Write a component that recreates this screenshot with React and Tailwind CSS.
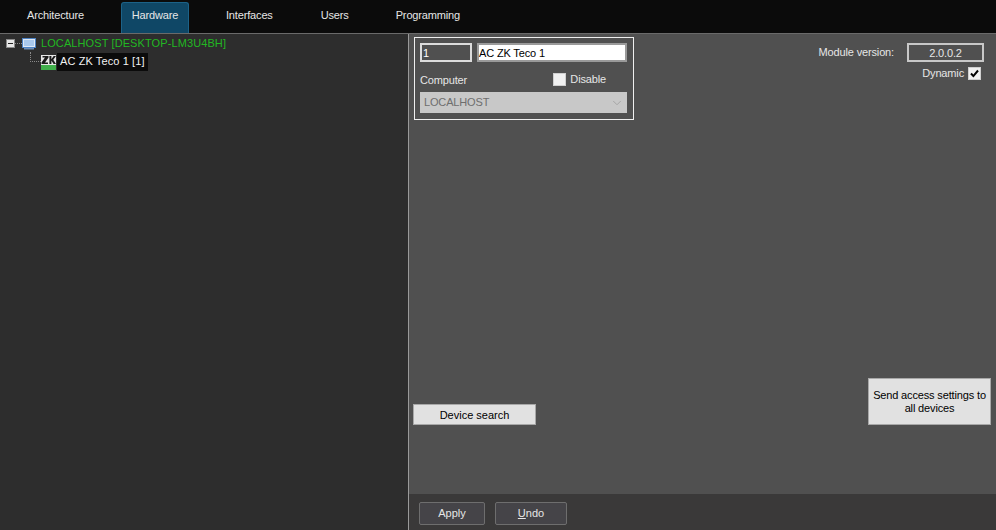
import React from 'react';
import { ChevronDown } from 'lucide-react';

const tabs = [
  { label: 'Architecture', className: 'ml-[27px] mr-[37px]' },
  { label: 'Hardware', active: true },
  { label: 'Interfaces', className: 'ml-[37px] mr-[48px]' },
  { label: 'Users', className: 'mr-[47px]' },
  { label: 'Programming' },
];

const TopTabs = () => (
  <div className="flex h-[33px] items-end bg-[#0b0b0b] tracking-[-0.15px] text-[#e6e6e6]">
    {tabs.map((tab) =>
      tab.active ? (
        <div
          key={tab.label}
          className="flex h-[31px] w-[68px] items-start justify-center rounded-t-[3px] border border-b-0 border-[#1c6288] bg-[#0f4766] pt-[4px]"
        >
          {tab.label}
        </div>
      ) : (
        <div key={tab.label} className={`flex h-[31px] items-start pt-[5px] ${tab.className}`}>
          {tab.label}
        </div>
      )
    )}
  </div>
);

const HostIcon = () => (
  <svg width="14" height="12" viewBox="0 0 14 12">
    <rect x="0.5" y="0.5" width="13" height="9" fill="#dfe9f5" stroke="#4d82c4" />
    <rect x="2" y="2" width="10" height="6" fill="#a9c8ec" />
    <rect x="2" y="10" width="10" height="1.5" fill="#6f8fb8" />
  </svg>
);

const ZkIcon = () => (
  <div className="mt-[1px] flex h-[15px] w-[15px] flex-col overflow-hidden">
    <svg width="15" height="10" viewBox="0 0 15 10" className="bg-[#e6e6e6]">
      <path d="M1.5 1h6v1.6L4 7.6h3V9H0.5V7.6L4 2.6H1.5z" fill="#1a1a1a" />
      <path d="M8.4 1h2v3.2L12.6 1H15l-2.7 3.7L15 9h-2.4l-2.2-3.4V9h-2z" fill="#1a1a1a" />
    </svg>
    <div className="h-[5px] bg-[#3fae4a]" />
  </div>
);

const TreePane = () => (
  <div className="w-[408px] shrink-0 bg-[#2d2d2d] pl-[6px] pt-[2px] tracking-[0.1px]">
    <div className="flex h-[15px] items-center">
      <div className="flex h-[9px] w-[9px] items-center justify-center border border-[#8a8a8a] bg-[#e6e6e6]">
        <div className="h-px w-[5px] bg-[#222]" />
      </div>
      <div className="w-[7px] border-t border-dotted border-[#8a8a8a]" />
      <HostIcon />
      <span className="ml-[5px] text-[#22b822]">LOCALHOST [DESKTOP-LM3U4BH]</span>
    </div>
    <div className="ml-[24px] mt-[1px] flex h-[19px] items-center">
      <div className="mb-[9px] h-[10px] w-[11px] border-b border-l border-dotted border-[#8a8a8a]" />
      <ZkIcon />
      <span className="ml-[1px] flex h-[18px] items-center bg-[#0b0b0b] px-[3px] text-[#f2f2f2]">AC ZK Teco 1 [1]</span>
    </div>
  </div>
);

const CheckBox = ({ checked }) => (
  <span className="flex h-[13px] w-[13px] items-center justify-center border border-[#cfcfcf] bg-[#f0f0f0]">
    {checked && (
      <svg width="9" height="9" viewBox="0 0 9 9">
        <path d="M1 4.5l2.4 2.6L8 1.5" fill="none" stroke="#000" strokeWidth="2" />
      </svg>
    )}
  </span>
);

const ObjectForm = () => (
  <div className="ml-[1px] flex h-[83px] w-[220px] flex-col border border-[#efefef] px-[5px] pt-[5px] tracking-[-0.15px]">
    <div className="flex gap-[5px]">
      <div className="flex h-[19px] w-[52px] items-center border-2 border-[#dcdcdc] pl-[1px] pt-[1px] text-white">1</div>
      <div className="flex h-[19px] w-[150px] items-center border-2 border-[#9a9a9a] bg-white pt-[1px] text-black">AC ZK Teco 1</div>
    </div>
    <div className="mt-[9px] flex h-[16px] items-center justify-between pr-[22px] text-[#e6e6e6]">
      <span className="mt-[2px]">Computer</span>
      <label className="flex items-center gap-[4px]">
        <CheckBox />
        Disable
      </label>
    </div>
    <div className="mt-[5px] flex h-[21px] w-[207px] items-center justify-between bg-[#c8c8c8] pl-[4px] pr-[3px] text-[#6e6e6e]">
      LOCALHOST
      <ChevronDown className="h-[14px] w-[14px] text-[#a0a0a0]" strokeWidth={1.5} />
    </div>
  </div>
);

const ModuleInfo = () => (
  <div className="mt-[6px] flex flex-col items-end tracking-[-0.15px] text-[#e6e6e6]">
    <div className="flex items-center gap-[13px]">
      <span>Module version:</span>
      <div className="flex h-[19px] w-[77px] items-center justify-center border-2 border-[#c8c8c8] pt-[1px]">2.0.0.2</div>
    </div>
    <div className="mr-[3px] mt-[3px] flex items-center gap-[4px]">
      <span>Dynamic</span>
      <CheckBox checked />
    </div>
  </div>
);

const App = () => (
  <div className="flex h-[530px] w-[996px] flex-col overflow-hidden bg-[#505050] font-['Liberation_Sans',sans-serif] text-[11px]">
    <TopTabs />
    <div className="flex min-h-0 flex-1 border-t border-[#6a6a6a]">
      <TreePane />
      <div className="flex min-w-0 flex-1 flex-col border-l border-[#9a9a9a]">
        <div className="flex flex-1 flex-col pl-[4px] pr-[5px] pt-[3px]">
          <div className="flex items-start justify-between pr-[7px]">
            <ObjectForm />
            <ModuleInfo />
          </div>
          <div className="mt-auto mb-[69px] flex items-end justify-between">
            <button className="h-[21px] w-[123px] border border-[#a8a8a8] bg-[#e1e1e1] pt-[1px] text-black">Device search</button>
            <button className="h-[47px] w-[123px] border border-[#a8a8a8] bg-[#e1e1e1] px-[2px] leading-[13px] tracking-[-0.15px] text-black">
              Send access settings to all devices
            </button>
          </div>
        </div>
        <div className="flex h-[36px] items-start gap-[10px] bg-[#3a3939] pl-[10px] pt-[8px] text-[#e6e6e6]">
          <button className="h-[23px] w-[66px] rounded-[2px] border border-[#6e6e6e] bg-[#454448]">Apply</button>
          <button className="h-[23px] w-[72px] rounded-[2px] border border-[#6e6e6e] bg-[#454448]">
            <span className="underline">U</span>ndo
          </button>
        </div>
      </div>
    </div>
  </div>
);

export default App;
